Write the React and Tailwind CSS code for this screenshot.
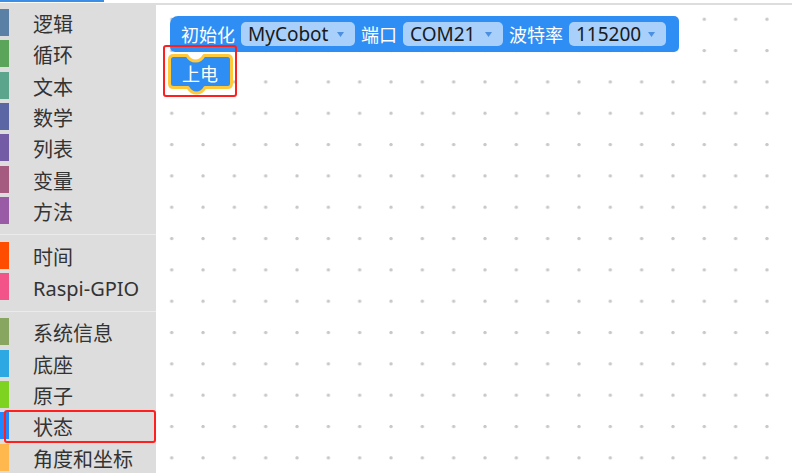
const GRUPOS = [
  [
    { nombre: '逻辑', color: '#5b80a5' },
    { nombre: '循环', color: '#5ba55b' },
    { nombre: '文本', color: '#5ba58c' },
    { nombre: '数学', color: '#5b67a5' },
    { nombre: '列表', color: '#745ba5' },
    { nombre: '变量', color: '#a55b80' },
    { nombre: '方法', color: '#995ba5' },
  ],
  [
    { nombre: '时间', color: '#ff4d00' },
    { nombre: 'Raspi-GPIO', color: '#f2548a' },
  ],
  [
    { nombre: '系统信息', color: '#88a660' },
    { nombre: '底座', color: '#2ea8e2' },
    { nombre: '原子', color: '#7ed321' },
    { nombre: '状态', color: '#1e88ff', marcado: true },
    { nombre: '角度和坐标', color: '#ffb84d' },
  ],
];

function Categoria({ item }) {
  return (
    <div className="relative h-[31.33px] flex items-start">
      <div className="w-[9px] h-[27px] mt-[2px] shrink-0" style={{ backgroundColor: item.color }} />
      <span className="ml-[24px] pt-[6px] text-[20px] leading-[24px] text-[#333333] whitespace-nowrap">
        {item.nombre}
      </span>
      {item.marcado && (
        <div className="absolute left-[4px] right-0 top-0 -bottom-[1px] border-2 border-[#ff1f1f] rounded-[3px]" />
      )}
    </div>
  );
}

function Desplegable({ texto, ancho }) {
  return (
    <div
      className="h-[24px] rounded-[5px] bg-[#a8d0fa] flex items-center pl-[7px] pr-[11px] text-[#1a1a1a]"
      style={{ width: ancho }}
    >
      <span className="text-[19px] leading-[24px]">{texto}</span>
      <svg width="7" height="5" viewBox="0 0 7 5" className="ml-auto">
        <path d="M0 0 L7 0 L3.5 5 Z" fill="#4a8fe0" />
      </svg>
    </div>
  );
}

export default function App() {
  return (
    <div
      className="w-[792px] h-[473px] overflow-hidden bg-white flex flex-col"
      style={{ fontFamily: '"Noto Sans", "Noto Sans CJK SC", sans-serif' }}
    >
      <div className="h-[3px] shrink-0">
        <div className="w-[104px] h-[2px] bg-[#3a8ee6]" />
      </div>
      <div className="flex flex-1">
        {/* SIDEBAR */}
        <div className="w-[156px] shrink-0 bg-[#dddddd] pt-[4px]">
          {GRUPOS.map((grupo, i) => (
            <div key={i}>
              {i > 0 && <div className="mt-[8px] mb-[4.7px] h-px bg-[#ebebeb]" />}
              {grupo.map((item) => (
                <Categoria key={item.nombre} item={item} />
              ))}
            </div>
          ))}
        </div>

        {/* CANVAS */}
        <div className="flex-1 flex flex-col">
          <div className="h-[2px] bg-[#dddddd]" />
          <div className="relative flex-1 [background-image:radial-gradient(circle_at_15.7px_14.3px,#c8c8c8_1.3px,transparent_2px)] [background-size:31.33px_31.33px]">
            {/* bloque inicializar */}
            <div className="absolute left-[14px] top-[11px] h-[36px] w-[509px] bg-[#2f8ef4] rounded-[5px] rounded-tl-[8px] flex items-center pl-[11px] gap-[6px] text-white">
              <span className="text-[18px] leading-[24px] pt-[2px]">初始化</span>
              <Desplegable texto="MyCobot" ancho={114} />
              <span className="text-[18px] leading-[24px] pt-[2px]">端口</span>
              <Desplegable texto="COM21" ancho={100} />
              <span className="text-[18px] leading-[24px] pt-[2px]">波特率</span>
              <Desplegable texto="115200" ancho={97} />
            </div>

            {/* bloque encender */}
            <div className="absolute left-[12px] top-[47px] w-[65px] h-[43px]">
              <svg width="65" height="43" viewBox="0 0 65 43" className="absolute inset-0">
                <path
                  d="M1.5 7.5 Q1.5 3.5 5.5 3.5 L19 3.5 Q22 9 27.5 9 Q33 9 36 3.5 L59.5 3.5 Q63.5 3.5 63.5 7.5 L63.5 31.5 Q63.5 35.5 59.5 35.5 L37 35.5 Q34 41 28.5 41 Q23 41 20 35.5 L5.5 35.5 Q1.5 35.5 1.5 31.5 Z"
                  fill="#2f8ef4"
                  stroke="#ffc93a"
                  strokeWidth="3"
                  strokeLinejoin="round"
                />
              </svg>
              <span className="absolute left-[14px] top-[10px] text-[18px] leading-[24px] text-white">上电</span>
            </div>
            <div className="absolute left-[7px] top-[40px] w-[74px] h-[52px] border-2 border-[#ff1f1f] rounded-[3px]" />
          </div>
        </div>
      </div>
    </div>
  );
}
